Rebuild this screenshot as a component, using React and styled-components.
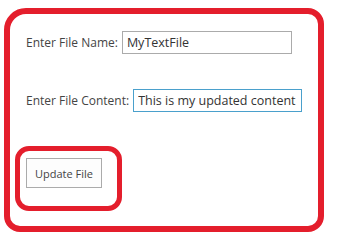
import React from 'react'
import styled, { createGlobalStyle } from 'styled-components'

const Global = createGlobalStyle`
  html, body {
    margin: 0;
    background: #fff;
  }
  body {
    font-family: "Open Sans", "Noto Sans", sans-serif;
    color: #444;
  }
`

const Frame = styled.div`
  box-sizing: border-box;
  width: 320px;
  height: 224px;
  margin: 8px 0 0 4px;
  border: 6px solid #e41e2c;
  border-radius: 22px 16px 16px 16px;
  padding: 17px 0 0 16px;
`

const Row = styled.div`
  display: flex;
  align-items: center;
  gap: 4px;
  height: 23px;
  margin-bottom: ${(p) => p.$gap || 0}px;
`

const Label = styled.label`
  font-size: 12px;
  color: #444;
  white-space: nowrap;
`

const Input = styled.input`
  box-sizing: border-box;
  width: ${(p) => p.$w}px;
  height: 23px;
  padding: 0 4px;
  border: 1px solid ${(p) => (p.$active ? '#4aa0cc' : '#ababab')};
  font-family: inherit;
  font-size: 12.5px;
  color: #333;
  outline: none;
  background: #fff;
`

const Highlight = styled.div`
  box-sizing: border-box;
  width: 107px;
  height: 65px;
  margin: 34px 0 0 -11px;
  border: 5px solid #e41e2c;
  border-radius: 14px;
  padding: 7px 0 0 6px;
`

const Button = styled.button`
  box-sizing: border-box;
  width: 76px;
  height: 30px;
  border: 1px solid #ababab;
  background: #fdfdfd;
  font-family: inherit;
  font-size: 11px;
  color: #444;
  padding: 0;
`

export default function App() {
  return (
    <>
      <Global />
      <Frame>
        <Row $gap={35}>
          <Label>Enter File Name:</Label>
          <Input $w={170} defaultValue="MyTextFile" />
        </Row>
        <Row>
          <Label>Enter File Content:</Label>
          <Input $w={169} $active defaultValue="This is my updated content" />
        </Row>
        <Highlight>
          <Button>Update File</Button>
        </Highlight>
      </Frame>
    </>
  )
}
